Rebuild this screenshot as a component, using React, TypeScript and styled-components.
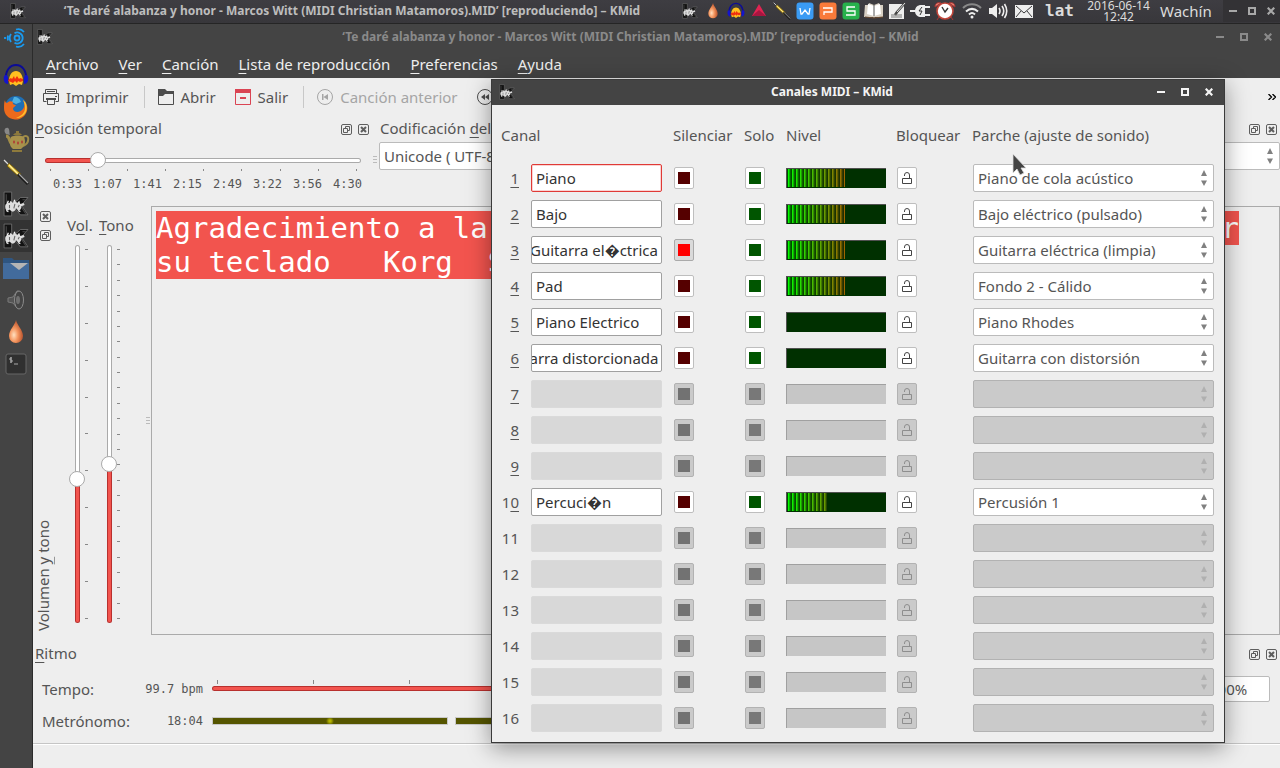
import React, { useLayoutEffect, useRef } from "react";
import styled, { createGlobalStyle, css } from "styled-components";

const ui = `"Noto Sans", "Open Sans", sans-serif`;
const mono = `"DejaVu Sans Mono", monospace`;

const GlobalStyle = createGlobalStyle`
  * { box-sizing: border-box; }
  body { margin: 0; background: #eeeeee; color: #555555; font: 15px/20px ${ui}; }
  button, input, select { font: inherit; color: inherit; margin: 0; }
  button { padding: 0; border: 0; background: none; }
  u { text-underline-offset: 3px; text-decoration-thickness: 1px; }
  svg { display: block; flex: none; }
`;

/* ---------- icons ---------- */

const KMidIcon = ({ size = 16 }: { size?: number }) => (
  <svg width={size} height={size} viewBox="0 0 24 24">
    <path d="M1 1h7v10l5-2 3-3h7l-6 7 6 9h-7l-4-5-4 1v5H1z" fill="#121212" stroke="#7a7a7a" strokeWidth=".7" />
    <path d="M3 3v8M18 8h3M17 15l4 6" stroke="#4a4a4a" fill="none" />
    <path d="M2 14c0-2 2-4 4-3l1-2 2 2c1-2 3-2 4 0l2-2 1 3 3-1 1 2-3 1c0 2-1 4-3 4l-2-2c-1 3-3 4-5 2l-1-1c-2 2-4 1-4-3z" fill="#dedede" />
    <path d="M6 13v3M11 12l-1 4M15 13l-1 2" stroke="#6a6a6a" strokeWidth="1" />
    <path d="M4 11l1-2M10 10l1-2M3 18l2 1M14 18l2 1" stroke="#f4f4f4" strokeWidth="1.2" />
  </svg>
);

const DropIcon = ({ w = 14, h = 20 }: { w?: number; h?: number }) => (
  <svg width={w} height={h} viewBox="0 0 16 24">
    <defs>
      <radialGradient id="drop" cx=".35" cy=".65" r=".6">
        <stop offset="0" stopColor="#ffe0c0" />
        <stop offset=".5" stopColor="#f4955e" />
        <stop offset="1" stopColor="#c05c34" />
      </radialGradient>
    </defs>
    <path d="M8 0c1 5 7 10 7 16a7 7 0 0 1-14 0C1 10 7 5 8 0z" fill="url(#drop)" />
  </svg>
);

const HeadphonesIcon = ({ size = 18 }: { size?: number }) => (
  <svg width={size} height={size} viewBox="0 0 26 26">
    <path d="M3 17C1-3 25-3 23 17" fill="none" stroke="#0c0c96" strokeWidth="2" />
    <path d="M1 13c2-2 4-1 4 2v6c-3 0-5-3-4-8zM25 13c-2-2-4-1-4 2v6c3 0 5-3 4-8z" fill="#1414cc" />
    <path d="M6 18c0-6 3-10 7-10s7 4 7 10l-1 4-3-1-3 2-3-2-3 1z" fill="#ffc020" />
    <path d="M6 16l2-1 1 1 2-3 1 3 2-3 2 3 1-1 3 1v2l-3 1-2-1-1 2-2-2-2 2-2-1-3-1z" fill="#f03010" />
  </svg>
);

const PenIcon = ({ size = 18 }: { size?: number }) => (
  <svg width={size} height={size} viewBox="0 0 26 26">
    <path d="M1 1l7 7" stroke="#ddd" strokeWidth="1.2" />
    <path d="M6 4l12 11-2 3L4 7z" fill="#d9b430" stroke="#5c4a10" strokeWidth=".8" />
    <path d="M6 6l9 9" stroke="#fff1a0" strokeWidth="1.2" />
    <path d="M15 15l10 10" stroke="#1c1c1c" strokeWidth="3" />
    <path d="M16 15l9 9" stroke="#a8a8a8" strokeWidth="1.2" />
  </svg>
);

const SpiralIcon = () => (
  <svg width="24" height="32" viewBox="0 0 24 32">
    <g fill="none" stroke="#1a9bf0" strokeWidth="1.8">
      <circle cx="13" cy="10" r="2.500" />
      <path d="M10.500 5.200a5.500 5.500 0 1 1 0 9.600M7 6a7 7 0 0 0 0 8M4 7.500a8 8 0 0 0 0 5M1 9v2" />
      <path d="M12 1.500c3-1 6 0 8 2.500M12 18.500c3 1 6 0 8-2.500" />
    </g>
  </svg>
);

const FirefoxIcon = () => (
  <svg width="26" height="26" viewBox="0 0 26 26">
    <circle cx="13" cy="12" r="11" fill="#1f6fb5" />
    <path d="M11 2c4 0 6 2 7 5l-5 2-4-2z" fill="#4fb0e0" />
    <path d="M2 5c0 2 1 3 2 3 2-2 4-2 6-1-1 2 1 3 3 3-1 2-3 2-3 4 1 4 7 4 10 0 2-3 2-6 0-9 4 3 5 7 4 11-2 6-7 9-12 8.500C5 24 1 19 1 13c0-3 0-6 1-8z" fill="#ec6a1c" />
    <path d="M20 5c4 3 4.500 8 3 12-2 4-6 6-10 6 5-2 9-5 9-10 0-3-1-6-2-8z" fill="#fdbf2d" />
  </svg>
);

const TeapotIcon = () => (
  <svg width="28" height="28" viewBox="0 0 28 28">
    <path d="M4 8C1 5 3 1 6 2c2 1 1 5 2 7" fill="#888" />
    <path d="M4 10c4 0 3 6 5 7" stroke="#a08c48" strokeWidth="3" fill="none" />
    <path d="M21 11c7-4 7 6 0 9" stroke="#a08c48" strokeWidth="2" fill="none" />
    <path d="M9 11c3-2 10-2 13 0 2 5 1 9-3 12H11c-4-3-4-8-2-12z" fill="#a8924c" />
    <path d="M11 9c2-3 7-3 9 0zM14 5h3v2h-3zM10 24h10v2H10z" fill="#8e7a3c" />
    <path d="M12 14l1 2-1 2-1-2zM16 15l1 2-1 2-1-2zM20 14l1 2-1 2-1-2z" fill="#b03030" />
  </svg>
);

const FolderIcon = () => (
  <svg width="26" height="24" viewBox="0 0 26 24">
    <path d="M0 2h9l2 2h15v19H0z" fill="#2f5580" />
    <path d="M0 7h26v16H0z" fill="#426b9c" />
    <path d="M7 7h18l-9 7z" fill="#b5b5b5" />
  </svg>
);

const SpeakerIcon = () => (
  <svg width="20" height="22" viewBox="0 0 20 22">
    <path d="M2 9l5-1 4-6c2-1 5 4 5 9s-3 9-5 8l-4-5-5-1z" fill="#555" stroke="#7a7a7a" />
    <ellipse cx="13" cy="11" rx="4.500" ry="9" fill="#444" stroke="#8b8b8b" />
    <ellipse cx="12" cy="11" rx="2" ry="4" fill="#707070" />
  </svg>
);

const TerminalIcon = () => (
  <svg width="22" height="22" viewBox="0 0 22 22">
    <rect x="1" y="1" width="20" height="20" rx="2" fill="#303030" stroke="#666" />
    <path d="M7 5H5v2h2v2H5M6 4v6M9 11h4" stroke="#aaa" fill="none" />
  </svg>
);

const TriangleIcon = () => (
  <svg width="16" height="16" viewBox="0 0 16 16">
    <path d="M8 1l7 12H1z" fill="#e02452" />
    <path d="M8 7l7 6H1z" fill="#a81640" />
  </svg>
);

const appPaths: Record<string, string> = {
  w: "M4 6l1 6h1l3-4 3 4h1l1-6",
  p: "M4 6h9v4H5v3",
  s: "M13 5H5v4h8v4H4",
};
const OfficeIcon = ({ kind, color }: { kind: string; color: string }) => (
  <svg width="18" height="18" viewBox="0 0 18 18">
    <rect x=".5" y=".5" width="17" height="17" rx="3" fill={color} />
    <path d={appPaths[kind]} fill="none" stroke="#fff" strokeWidth="1.3" />
  </svg>
);

const BookIcon = () => (
  <svg width="20" height="18" viewBox="0 0 20 18">
    <path d="M1 3h3l1-2 5 2 5-2 1 2h3v12h-8l-1 1-1-1H0z" fill="#d8d0c4" />
    <path d="M4 2l6 2v10l-7-2zM16 2l-6 2v10l7-2z" fill="#fff" />
    <path d="M10 3v11" stroke="#555" />
    <path d="M1 15l9 1 9-1" stroke="#6b4a30" fill="none" />
  </svg>
);

const NoteIcon = () => (
  <svg width="18" height="18" viewBox="0 0 18 18">
    <path d="M1 2h15v15H1z" fill="#eee" />
    <path d="M17 1L9 10l-2 3" stroke="#444" strokeWidth="2.5" fill="none" />
    <path d="M17 1L9 10" stroke="#ddd" />
    <path d="M3 13h11M3 15h11" stroke="#777" />
  </svg>
);

const PlugIcon = () => (
  <svg width="20" height="16" viewBox="0 0 20 16">
    <path d="M0 8h6M15 4h5M15 12h5" stroke="#eee" strokeWidth="2" />
    <path d="M5 8c0-4 3-6 6-6h4v12h-4c-3 0-6-2-6-6z" fill="#eee" />
    <path d="M12 4l-3 4h3l-2 4" stroke="#333" fill="none" />
  </svg>
);

const ClockIcon = () => (
  <svg width="22" height="20" viewBox="0 0 22 20">
    <path d="M1 6c0-4 3-5 6-4zM21 6c0-4-3-5-6-4zM5 16l-2 3M17 16l2 3" fill="#e58070" stroke="#a33" />
    <circle cx="11" cy="10" r="8" fill="#fff" stroke="#c0453a" strokeWidth="1.6" />
    <path d="M8 6l3 5 3-4" stroke="#333" strokeWidth="1.4" fill="none" />
  </svg>
);

const WifiIcon = () => (
  <svg width="20" height="16" viewBox="0 0 20 16" fill="none" strokeWidth="2">
    <path d="M1 5c5-5 13-5 18 0" stroke="#888" />
    <path d="M4 8.500c4-3.500 8-3.500 12 0M7 11.500c2-2 4-2 6 0" stroke="#eee" />
    <circle cx="10" cy="14" r="1.500" fill="#eee" />
  </svg>
);

const SoundIcon = () => (
  <svg width="20" height="16" viewBox="0 0 20 16" fill="none" stroke="#eee" strokeWidth="1.6">
    <path d="M1 5h3l5-4v14l-5-4H1z" fill="#eee" stroke="none" />
    <path d="M11 5q2 3 0 6M14 3q3.500 5 0 10M16.500 1q4.500 7 0 14" />
  </svg>
);

const MailIcon = () => (
  <svg width="18" height="13" viewBox="0 0 18 13">
    <path d="M0 0h18v13H0z" fill="#eee" />
    <path d="M1 1l8 7 8-7M1 12l5-6M17 12l-5-6" stroke="#3a3a3c" fill="none" />
  </svg>
);

const PrinterIcon = () => (
  <svg width="16" height="16" viewBox="0 0 16 16" fill="none" stroke="#4d4d4d">
    <path d="M2.500 4V.5h11V4" />
    <path d="M3.500 12.500h-3v-8h15v8h-3M4 2.500h8" />
    <path d="M12 7.500h2" />
    <path d="M3 9h10v2H3z" fill="#4d4d4d" stroke="none" />
    <path d="M4.500 10v5.500h7V10" />
  </svg>
);

const OpenIcon = () => (
  <svg width="16" height="16" viewBox="0 0 16 16">
    <path d="M.5 15.500V.5h6l2 2h7v13z" fill="none" stroke="#4d4d4d" />
    <path d="M0 0h7l2 2h7v3H7L5 7H0z" fill="#4d4d4d" />
  </svg>
);

const QuitIcon = () => (
  <svg width="16" height="16" viewBox="0 0 16 16">
    <path d="M.5.5h15v15H.5z" fill="none" stroke="#da4453" />
    <path d="M0 0h16v4H0zM5 8h6v2H5z" fill="#da4453" />
  </svg>
);

const PrevIcon = () => (
  <svg width="16" height="16" viewBox="0 0 16 16">
    <circle cx="8" cy="8" r="7.500" fill="none" stroke="#a5a5a5" />
    <path d="M5 5h1.500v6H5zM11 5v6L6.500 8z" fill="#a5a5a5" />
  </svg>
);

const RewindIcon = () => (
  <svg width="16" height="16" viewBox="0 0 16 16">
    <circle cx="8" cy="8" r="7.500" fill="none" stroke="#4d4d4d" />
    <path d="M8 5v6L4 8zM12 5v6L8 8z" fill="#4d4d4d" />
  </svg>
);

const MoreIcon = () => (
  <svg width="8" height="6" viewBox="0 0 8 6">
    <path d="M.5 0l3 3-3 3M4.500 0l3 3-3 3" fill="none" stroke="#000" strokeWidth="1.3" />
  </svg>
);

const FloatIcon = () => (
  <svg width="11" height="11" viewBox="0 0 11 11" fill="none" stroke="#5e5e5e">
    <rect x=".5" y=".5" width="10" height="10" rx="1.500" />
    <path d="M4.500 4V2.500h4v4H7M2.500 4.500h4v4h-4z" />
  </svg>
);

const DockCloseIcon = () => (
  <svg width="11" height="11" viewBox="0 0 11 11" fill="none" stroke="#5e5e5e">
    <rect x=".5" y=".5" width="10" height="10" rx="1.500" />
    <path d="M3 3l5 5M8 3L3 8" strokeWidth="2" />
  </svg>
);

const LockIcon = () => (
  <svg width="10" height="13" viewBox="0 0 10 13" fill="none" stroke="currentColor">
    <path d="M.5 6.500h9v5h-9zM7.500 6V3a2.500 2.500 0 0 0-5 0v1" />
  </svg>
);

const ArrowsIcon = ({ color }: { color: string }) => (
  <svg width="6" height="16" viewBox="0 0 6 16" fill={color}>
    <path d="M3 0l3 6H0zM3 16l3-5.500H0z" />
  </svg>
);

const MinIcon = () => (
  <svg width="8" height="8" viewBox="0 0 8 8"><path d="M0 3h8v2H0z" fill="currentColor" /></svg>
);
const MaxIcon = () => (
  <svg width="8" height="8" viewBox="0 0 8 8"><path d="M1 1h6v6H1z" fill="none" stroke="currentColor" strokeWidth="2" /></svg>
);
const CloseIcon = () => (
  <svg width="8" height="8" viewBox="0 0 8 8"><path d="M.7.7l6.600 6.600M7.300.7L.7 7.300" stroke="currentColor" strokeWidth="2.2" /></svg>
);

const PointerIcon = () => (
  <svg width="14" height="24" viewBox="0 0 14 24">
    <path d="M1 1v19l4-4 3 6 4-2-3-5h5z" fill="#444" stroke="#ddd" strokeWidth=".8" />
  </svg>
);

/* ---------- desktop ---------- */

const Desktop = styled.div`
  position: relative;
  display: flex;
  flex-direction: column;
  min-height: 100vh;
  overflow: hidden;
`;

const Panel = styled.header`
  display: flex;
  align-items: center;
  height: 24px;
  padding: 0 0 1px 10px;
  background: linear-gradient(#3e3d42, #38373b);
  border-bottom: 1px solid #252525;
  color: #dcdcdc;
`;

const Title = styled.h1<{ $color: string }>`
  flex: 1;
  min-width: 0;
  margin: 0;
  overflow: hidden;
  white-space: nowrap;
  text-align: center;
  font: bold 12px/20px ${ui};
  color: ${(p) => p.$color};
`;

const TrayItem = styled.button<{ $w?: number }>`
  display: flex;
  align-items: center;
  justify-content: center;
  flex: none;
  width: ${(p) => p.$w ?? 23}px;
  height: 22px;
`;

const Layout = styled.span`
  width: 40px;
  padding-left: 8px;
  font: bold 16px/20px ${mono};
`;

const DateTime = styled.time`
  width: 83px;
  text-align: center;
  font: 12px/11px ${ui};
`;

const User = styled.span`
  width: 63px;
`;

const WindowButtons = styled.div<{ $w: number; $color: string; $bg?: string }>`
  display: flex;
  align-self: stretch;
  align-items: center;
  color: ${(p) => p.$color};
  background: ${(p) => p.$bg ?? "none"};
  button {
    display: flex;
    align-items: center;
    justify-content: center;
    width: ${(p) => p.$w}px;
    height: 20px;
  }
`;

const Body = styled.div`
  flex: 1;
  display: flex;
`;

const Launcher = styled.nav`
  flex: none;
  width: 33px;
  padding-top: 4px;
  background: #444444;
  border-right: 1px solid #2b2b2b;
`;

const LauncherItem = styled.button<{ $active?: boolean }>`
  display: flex;
  align-items: center;
  justify-content: center;
  width: 32px;
  height: 32px;
  background: ${(p) => (p.$active ? "#333333" : "none")};
`;

/* ---------- main window ---------- */

const Main = styled.main`
  flex: 1;
  min-width: 0;
  display: flex;
  flex-direction: column;
`;

const TitleBar = styled.div`
  display: flex;
  align-items: center;
  height: 27px;
  padding: 0 0 2px 4px;
  background: #444444;
`;

const MenuBar = styled.nav`
  display: flex;
  height: 27px;
  padding: 0 0 2px 3px;
  background: #444444;
  button {
    padding: 0 10px;
    color: #eeeeee;
  }
`;

const Toolbar = styled.div`
  display: flex;
  align-items: center;
  height: 39px;
  padding: 0 4px 2px 10px;
`;

const ToolButton = styled.button`
  display: flex;
  align-items: center;
  gap: 7px;
  margin-right: 19px;
  white-space: nowrap;
  &:disabled { color: #a5a5a5; }
`;

const Divider = styled.span`
  width: 1px;
  height: 22px;
  margin: 0 13px 0 -4px;
  background: #c8c8c8;
`;

const Spacer = styled.span`
  flex: 1;
`;

const DockRow = styled.div`
  display: flex;
  height: 89px;
`;

const Dock = styled.section<{ $w?: number }>`
  min-width: 0;
  ${(p) => (p.$w ? css`flex: none; width: ${p.$w}px;` : css`flex: 1;`)}
`;

const DockHead = styled.div<{ $end: number; $start?: number }>`
  display: flex;
  align-items: center;
  gap: 6px;
  height: 24px;
  padding: 0 ${(p) => p.$end}px 0 ${(p) => p.$start ?? 2}px;
  h2 { flex: 1; margin: 0; padding-bottom: 2px; font: inherit; }
`;

const TimelineRow = styled.div`
  display: flex;
  align-items: center;
  gap: 12px;
  margin-top: 11px;
  padding: 0 2px 0 12px;
`;

const Grip = styled.span`
  width: 4px;
  height: 8px;
  background: repeating-linear-gradient(#bbbbbb 0 1px, transparent 1px 3px);
`;

const track = css`
  border: 1px solid transparent;
  border-radius: 3px;
`;
const fill = (dir: string, pct: number) => css`
  background:
    linear-gradient(${dir}, #f2544e ${pct}%, #ffffff ${pct}%) padding-box,
    linear-gradient(${dir}, #b8302e ${pct}%, #aaaaaa ${pct}%) border-box;
`;
const thumb = css`
  appearance: none;
  width: 16px;
  height: 16px;
  border: 1px solid #aaaaaa;
  border-radius: 50%;
  background: #ffffff;
`;

const HSlider = styled.input<{ $pct: number }>`
  appearance: none;
  display: block;
  flex: 1;
  min-width: 0;
  height: 16px;
  background: none;
  &::-webkit-slider-runnable-track { ${track} height: 5px; ${(p) => fill("to right", p.$pct)} }
  &::-webkit-slider-thumb { ${thumb} margin-top: -7px; }
`;

const VSlider = styled.input<{ $pct: number }>`
  appearance: none;
  display: block;
  flex: 1 1 0;
  min-height: 0;
  writing-mode: vertical-lr;
  direction: rtl;
  width: 16px;
  background: none;
  &::-webkit-slider-runnable-track { ${track} width: 5px; ${(p) => fill("to top", p.$pct)} }
  &::-webkit-slider-thumb { ${thumb} margin-left: -7px; }
`;

const HTicks = styled.div`
  display: flex;
  justify-content: space-between;
  margin: 1px 22px 0 17px;
  i { width: 1px; height: 2px; background: #888888; }
`;

const TimeLabels = styled.div`
  display: flex;
  justify-content: space-between;
  margin: 6px 17px 0 20px;
  font: 12px/14px ${mono};
`;

const SelectWrap = styled.div<{ $top?: number; $left?: number }>`
  display: grid;
  align-items: center;
  margin: ${(p) => p.$top ?? 0}px 0 0 ${(p) => p.$left ?? 0}px;
  select, svg { grid-area: 1 / 1; }
  svg { justify-self: end; margin-right: 7px; pointer-events: none; }
`;

const Select = styled.select`
  appearance: none;
  width: 100%;
  height: 28px;
  padding: 0 20px 0 4px;
  border: 1px solid #bbbbbb;
  border-radius: 2px;
  background: #ffffff;
  &:disabled { background: #cacaca; border-color: #b2b2b2; opacity: 1; }
`;

const Center = styled.div`
  flex: 1;
  display: flex;
  min-height: 300px;
`;

const VolumeDock = styled.section`
  flex: none;
  display: flex;
  width: 118px;
`;

const VolumeSide = styled.div`
  display: flex;
  flex-direction: column;
  align-items: flex-start;
  gap: 8px;
  width: 27px;
  padding: 5px 0 4px 7px;
  h2 {
    writing-mode: vertical-rl;
    transform: rotate(180deg);
    margin: auto 0 0 -7px;
    font: inherit;
    white-space: nowrap;
  }
`;

const SliderColumn = styled.div<{ $w: number }>`
  display: flex;
  flex-direction: column;
  width: ${(p) => p.$w}px;
  padding: 9px 0 12px;
`;

const SliderBody = styled.div`
  flex: 1;
  display: flex;
  margin-top: 10px;
`;

const SliderSlot = styled.div<{ $inset: number }>`
  display: flex;
  flex-direction: column;
  padding-left: ${(p) => p.$inset}px;
`;

const SliderLabel = styled.label<{ $inset: number }>`
  padding-left: ${(p) => p.$inset}px;
`;

const VTicks = styled.div`
  display: flex;
  flex-direction: column;
  justify-content: space-between;
  padding: 4px 0;
  i { width: 3px; height: 1px; background: #888888; }
`;

const GripCell = styled.div`
  display: flex;
  align-items: center;
  margin-left: auto;
  padding-right: 1px;
`;

const Lyrics = styled.div`
  flex: 1;
  min-width: 0;
  padding: 4px;
  border: 1px solid #aaaaaa;
  font: 29px/34px ${mono};
  color: #ffffff;
  white-space: pre;
`;

const LyricLine = styled.p<{ $gapEnd: number }>`
  display: flex;
  justify-content: space-between;
  margin: 0 ${(p) => p.$gapEnd}px 0 0;
  background: #f2544e;
`;

const Rhythm = styled.section`
  display: flex;
  flex-direction: column;
  height: 108px;
  padding-top: 7px;
`;

const RhythmRow = styled.div<{ $top: number; $h: number }>`
  display: flex;
  align-items: center;
  height: ${(p) => p.$h}px;
  margin-top: ${(p) => p.$top}px;
  padding: 0 10px 0 9px;
`;

const RhythmLabel = styled.label`
  width: 90px;
`;

const Readout = styled.output`
  width: 71px;
  margin-right: 9px;
  text-align: right;
  font: 12px/14px ${mono};
`;

const TempoTrack = styled.div`
  flex: 1;
  display: flex;
  flex-direction: column;
  margin-right: 12px;
  padding-bottom: 8px;
`;

const TempoTicks = styled.div`
  display: flex;
  gap: 95px;
  height: 6px;
  padding-left: 5px;
  overflow: hidden;
  i { flex: none; width: 1px; height: 4px; background: #888888; }
`;

const Spin = styled.input`
  width: 66px;
  height: 26px;
  padding: 0 4px;
  border: 1px solid #bbbbbb;
  border-radius: 2px;
  background: #ffffff;
`;

const Beats = styled.div`
  flex: 1;
  display: flex;
  gap: 7px;
`;

const Beat = styled.span<{ $lit?: boolean }>`
  flex: none;
  width: 236px;
  height: 8px;
  border: 1px solid #c8c8c8;
  background: ${(p) => (p.$lit ? "radial-gradient(circle at 50% 50%, #b4b400 0 1px, #555500 4px)" : "#555500")};
`;

const StatusBar = styled.footer`
  height: 25px;
  border-top: 1px solid #c5c5c5;
  box-shadow: inset 0 1px #ffffff;
`;

/* ---------- channels dialog ---------- */

const Dialog = styled.div`
  position: absolute;
  left: 491px;
  top: 79px;
  width: 734px;
  border: 1px solid #3a3a3a;
  background: #eeeeee;
  box-shadow: 0 5px 22px rgba(0, 0, 0, 0.4);
`;

const DialogTitleBar = styled(TitleBar)`
  height: 25px;
  padding: 0 3px 1px 7px;
`;

const DialogBody = styled.div`
  padding: 0 10px 6px 9px;
`;

const Channels = styled.table`
  width: 100%;
  border-collapse: collapse;
  table-layout: fixed;
  th {
    height: 55px;
    padding: 4px 0 0;
    text-align: left;
    font-weight: normal;
    white-space: nowrap;
  }
  td { height: 36px; padding: 0; }
`;

const ChannelNumber = styled.label`
  display: block;
  width: 18px;
  text-align: right;
`;

const NameField = styled.input<{ $focused?: boolean; $scrolled?: boolean }>`
  display: block;
  width: 131px;
  height: 28px;
  padding: 0 3px 0 ${(p) => (p.$scrolled ? 0 : 4)}px;
  border: 1px solid ${(p) => (p.$focused ? "#e03a36" : "#a0a0a0")};
  border-radius: 2px;
  background: #ffffff;
  color: #333333;
  ${(p) => p.$focused && css`box-shadow: inset 0 0 0 1px #f9d4d3;`}
  &:disabled { background: #d8d8d8; border-color: #dadada; }
`;

const Toggle = styled.button<{ $down?: boolean }>`
  display: flex;
  align-items: center;
  justify-content: center;
  width: 20px;
  height: 22px;
  margin-left: 1px;
  border: 1px solid ${(p) => (p.$down ? "#aaaaaa" : "#bebebe")};
  border-radius: 2px;
  background: ${(p) => (p.$down ? "#dadada" : "#ffffff")};
  color: #444444;
  &:disabled { background: #cacaca; border-color: #b2b2b2; color: #8e8e8e; }
`;

const Led = styled.span<{ $color: string }>`
  width: 12px;
  height: 12px;
  background: ${(p) => p.$color};
`;

const Meter = styled.div<{ $off: boolean }>`
  width: 100px;
  height: 20px;
  border: solid ${(p) => (p.$off ? "#a0a0a0" : "#505050")};
  border-width: 1px 0 0 1px;
  background: ${(p) => (p.$off ? "#c6c6c6" : "#003000")};
`;

const MeterFill = styled.div`
  height: 18px;
  background:
    repeating-linear-gradient(90deg, rgba(0, 32, 0, 0.8) 0 1px, transparent 1px 2px, rgba(0, 32, 0, 0.3) 2px 3px, rgba(0, 32, 0, 0.65) 3px 4px),
    linear-gradient(90deg, #00ff00, #a06400 58px);
`;

const Pointer = styled.div`
  position: absolute;
  left: 1012px;
  top: 153px;
  pointer-events: none;
`;

/* ---------- data ---------- */

type Channel = { name?: string; patch?: string; level?: number; muted?: boolean };

const channels: Channel[] = [
  { name: "Piano", patch: "Piano de cola acústico", level: 59 },
  { name: "Bajo", patch: "Bajo eléctrico (pulsado)", level: 59 },
  { name: "Guitarra el\uFFFDctrica", patch: "Guitarra eléctrica (limpia)", level: 59, muted: true },
  { name: "Pad", patch: "Fondo 2 - Cálido", level: 59 },
  { name: "Piano Electrico", patch: "Piano Rhodes", level: 0 },
  { name: "Guitarra distorcionada", patch: "Guitarra con distorsión", level: 0 },
  {},
  {},
  {},
  { name: "Percuci\uFFFDn", patch: "Percusión 1", level: 40 },
  {},
  {},
  {},
  {},
  {},
  {},
];

const times = ["0:33", "1:07", "1:41", "2:15", "2:49", "3:22", "3:56", "4:30"];
const menus = [
  ["A", "rchivo"],
  ["V", "er"],
  ["C", "anción"],
  ["L", "ista de reproducción"],
  ["P", "referencias"],
  ["A", "yuda"],
];
const songTitle = "‘Te daré alabanza y honor - Marcos Witt (MIDI Christian Matamoros).MID’ [reproduciendo] – KMid";
const columns = [30, 142, 71, 42, 110, 76, 242];

const ticks = (n: number) => Array.from({ length: n }, (_, i) => <i key={i} />);

/* ---------- parts ---------- */

const Controls = ({ w, color, bg }: { w: number; color: string; bg?: string }) => (
  <WindowButtons $w={w} $color={color} $bg={bg}>
    <button aria-label="Minimizar"><MinIcon /></button>
    <button aria-label="Maximizar"><MaxIcon /></button>
    <button aria-label="Cerrar"><CloseIcon /></button>
  </WindowButtons>
);

const DockButtons = () => (
  <>
    <button aria-label="Flotar"><FloatIcon /></button>
    <button aria-label="Cerrar panel"><DockCloseIcon /></button>
  </>
);

/* Long names stay scrolled to their last characters. */
const ChannelName = ({ id, value, disabled, focused }: { id: string; value: string; disabled: boolean; focused: boolean }) => {
  const ref = useRef<HTMLInputElement>(null);
  useLayoutEffect(() => {
    if (ref.current) ref.current.scrollLeft = ref.current.scrollWidth;
  }, [value]);
  return (
    <NameField ref={ref} id={id} defaultValue={value} disabled={disabled} $focused={focused} $scrolled={value.length > 16} />
  );
};

const numberLabel = (n: number) => {
  if (n < 10) return <u>{n}</u>;
  if (n === 10) return <>1<u>0</u></>;
  return n;
};

const ChannelRow = ({ n, channel }: { n: number; channel: Channel }) => {
  const off = !channel.patch;
  const id = `channel-${n}`;
  return (
    <tr>
      <td><ChannelNumber htmlFor={id}>{numberLabel(n)}</ChannelNumber></td>
      <td><ChannelName id={id} value={channel.name ?? ""} disabled={off} focused={n === 1} /></td>
      <td>
        <Toggle disabled={off} $down={channel.muted} aria-pressed={!!channel.muted} aria-label={`Silenciar ${n}`}>
          <Led $color={off ? "#727272" : channel.muted ? "#ff0000" : "#550000"} />
        </Toggle>
      </td>
      <td>
        <Toggle disabled={off} aria-pressed={false} aria-label={`Solo ${n}`}>
          <Led $color={off ? "#787878" : "#005500"} />
        </Toggle>
      </td>
      <td>
        <Meter $off={off} role="meter" aria-valuenow={channel.level ?? 0} aria-label={`Nivel ${n}`}>
          {!!channel.level && <MeterFill style={{ width: `${channel.level}%` }} />}
        </Meter>
      </td>
      <td>
        <Toggle disabled={off} aria-label={`Bloquear ${n}`}><LockIcon /></Toggle>
      </td>
      <td>
        <SelectWrap $left={1}>
          <Select disabled={off} aria-label={`Parche ${n}`}>
            {channel.patch && <option>{channel.patch}</option>}
          </Select>
          <ArrowsIcon color={off ? "#b0b0b0" : "#808080"} />
        </SelectWrap>
      </td>
    </tr>
  );
};

const ChannelsDialog = () => (
  <Dialog role="dialog" aria-label="Canales MIDI">
    <DialogTitleBar>
      <KMidIcon />
      <Title as="h2" $color="#f4f4f4">Canales MIDI – KMid</Title>
      <Controls w={24} color="#f4f4f4" />
    </DialogTitleBar>
    <DialogBody>
      <Channels>
        <colgroup>{columns.map((w, i) => <col key={i} width={w} />)}</colgroup>
        <thead>
          <tr>
            <th colSpan={2}>Canal</th>
            <th>Silenciar</th>
            <th>Solo</th>
            <th>Nivel</th>
            <th>Bloquear</th>
            <th>Parche (ajuste de sonido)</th>
          </tr>
        </thead>
        <tbody>
          {channels.map((c, i) => <ChannelRow key={i} n={i + 1} channel={c} />)}
        </tbody>
      </Channels>
    </DialogBody>
  </Dialog>
);

const TopPanel = () => (
  <Panel>
    <KMidIcon />
    <Title as="div" $color="#bdbdbd">{songTitle}</Title>
    <TrayItem aria-label="KMid"><KMidIcon /></TrayItem>
    <TrayItem aria-label="Gota"><DropIcon w={12} h={16} /></TrayItem>
    <TrayItem aria-label="Audacity"><HeadphonesIcon /></TrayItem>
    <TrayItem aria-label="Ardour"><TriangleIcon /></TrayItem>
    <TrayItem aria-label="Pluma"><PenIcon /></TrayItem>
    <TrayItem aria-label="Writer"><OfficeIcon kind="w" color="#3a9bf4" /></TrayItem>
    <TrayItem aria-label="Presentation"><OfficeIcon kind="p" color="#f97a3a" /></TrayItem>
    <TrayItem aria-label="Spreadsheets"><OfficeIcon kind="s" color="#27b14c" /></TrayItem>
    <TrayItem aria-label="Libro"><BookIcon /></TrayItem>
    <TrayItem aria-label="Notas"><NoteIcon /></TrayItem>
    <TrayItem aria-label="Energía"><PlugIcon /></TrayItem>
    <TrayItem $w={28} aria-label="Alarma"><ClockIcon /></TrayItem>
    <TrayItem $w={26} aria-label="Red"><WifiIcon /></TrayItem>
    <TrayItem $w={26} aria-label="Volumen"><SoundIcon /></TrayItem>
    <TrayItem $w={26} aria-label="Correo"><MailIcon /></TrayItem>
    <Layout>lat</Layout>
    <DateTime>2016-06-14<br />12:42</DateTime>
    <User>Wachín</User>
    <Controls w={19} color="#a8a8a8" bg="#333235" />
  </Panel>
);

const Docks = () => (
  <DockRow>
    <Dock $w={346}>
      <DockHead $end={10}>
        <h2><u>P</u>osición temporal</h2>
        <DockButtons />
      </DockHead>
      <TimelineRow>
        <HSlider type="range" min={0} max={1000} defaultValue={148} $pct={17} aria-label="Posición temporal" />
        <Grip />
      </TimelineRow>
      <HTicks>{ticks(9)}</HTicks>
      <TimeLabels>{times.map((t) => <span key={t}>{t}</span>)}</TimeLabels>
    </Dock>
    <Dock>
      <DockHead $end={3} $start={1}>
        <h2>Codificación <u>d</u>el</h2>
        <DockButtons />
      </DockHead>
      <SelectWrap $top={1}>
        <Select aria-label="Codificación del texto"><option>Unicode ( UTF-8 )</option></Select>
        <ArrowsIcon color="#808080" />
      </SelectWrap>
    </Dock>
  </DockRow>
);

const VolumePanel = () => (
  <VolumeDock>
    <VolumeSide>
      <button aria-label="Cerrar panel"><DockCloseIcon /></button>
      <button aria-label="Flotar"><FloatIcon /></button>
      <h2>Volumen <u>y</u> tono</h2>
    </VolumeSide>
    <SliderColumn $w={37}>
      <SliderLabel htmlFor="volume" $inset={7}>V<u>o</u>l.</SliderLabel>
      <SliderBody>
        <SliderSlot $inset={9}>
          <VSlider id="volume" type="range" min={0} max={1000} defaultValue={376} $pct={38} />
        </SliderSlot>
        <VTicks>{ticks(11)}</VTicks>
      </SliderBody>
    </SliderColumn>
    <SliderColumn $w={42}>
      <SliderLabel htmlFor="pitch" $inset={2}><u>T</u>ono</SliderLabel>
      <SliderBody>
        <SliderSlot $inset={4}>
          <VSlider id="pitch" type="range" min={0} max={1000} defaultValue={417} $pct={42} />
        </SliderSlot>
        <VTicks>{ticks(25)}</VTicks>
      </SliderBody>
    </SliderColumn>
    <GripCell><Grip /></GripCell>
  </VolumeDock>
);

const RhythmPanel = () => (
  <Rhythm>
    <DockHead $end={3}>
      <h2><u>R</u>itmo</h2>
      <DockButtons />
    </DockHead>
    <RhythmRow $top={10} $h={26}>
      <RhythmLabel htmlFor="tempo">Tempo:</RhythmLabel>
      <Readout>99.7 bpm</Readout>
      <TempoTrack>
        <TempoTicks>{ticks(11)}</TempoTicks>
        <HSlider id="tempo" type="range" min={0} max={100} defaultValue={50} $pct={50} />
      </TempoTrack>
      <Spin aria-label="Porcentaje de tempo" defaultValue="100%" />
    </RhythmRow>
    <RhythmRow $top={9} $h={20}>
      <RhythmLabel as="span">Metrónomo:</RhythmLabel>
      <Readout>18:04</Readout>
      <Beats><Beat $lit /><Beat /><Beat /><Beat /></Beats>
    </RhythmRow>
  </Rhythm>
);

export default function App() {
  return (
    <Desktop>
      <GlobalStyle />
      <TopPanel />
      <Body>
        <Launcher>
          <LauncherItem aria-label="Ubuntu Studio"><SpiralIcon /></LauncherItem>
          <LauncherItem aria-label="Audacity"><HeadphonesIcon size={26} /></LauncherItem>
          <LauncherItem aria-label="Firefox"><FirefoxIcon /></LauncherItem>
          <LauncherItem aria-label="Tetera"><TeapotIcon /></LauncherItem>
          <LauncherItem aria-label="Pluma"><PenIcon size={26} /></LauncherItem>
          <LauncherItem aria-label="KMid"><KMidIcon size={26} /></LauncherItem>
          <LauncherItem $active aria-label="KMid"><KMidIcon size={26} /></LauncherItem>
          <LauncherItem aria-label="Archivos"><FolderIcon /></LauncherItem>
          <LauncherItem aria-label="Sonido"><SpeakerIcon /></LauncherItem>
          <LauncherItem aria-label="Gota"><DropIcon w={16} h={24} /></LauncherItem>
          <LauncherItem aria-label="Terminal"><TerminalIcon /></LauncherItem>
        </Launcher>
        <Main>
          <TitleBar>
            <KMidIcon />
            <Title $color="#8a8a8a">{songTitle}</Title>
            <Controls w={24} color="#8a8a8a" />
          </TitleBar>
          <MenuBar>
            {menus.map(([key, rest]) => <button key={key + rest}><u>{key}</u>{rest}</button>)}
          </MenuBar>
          <Toolbar>
            <ToolButton><PrinterIcon />Imprimir</ToolButton>
            <Divider />
            <ToolButton><OpenIcon />Abrir</ToolButton>
            <ToolButton><QuitIcon />Salir</ToolButton>
            <Divider />
            <ToolButton disabled><PrevIcon />Canción anterior</ToolButton>
            <ToolButton aria-label="Retroceder"><RewindIcon /></ToolButton>
            <Spacer />
            <button aria-label="Más"><MoreIcon /></button>
          </Toolbar>
          <Docks />
          <Center>
            <VolumePanel />
            <Lyrics>
              <LyricLine $gapEnd={36}><span>Agradecimiento a la</span><span>r</span></LyricLine>
              <LyricLine $gapEnd={100}>su teclado   Korg  S</LyricLine>
            </Lyrics>
          </Center>
          <RhythmPanel />
          <StatusBar />
        </Main>
      </Body>
      <ChannelsDialog />
      <Pointer><PointerIcon /></Pointer>
    </Desktop>
  );
}
